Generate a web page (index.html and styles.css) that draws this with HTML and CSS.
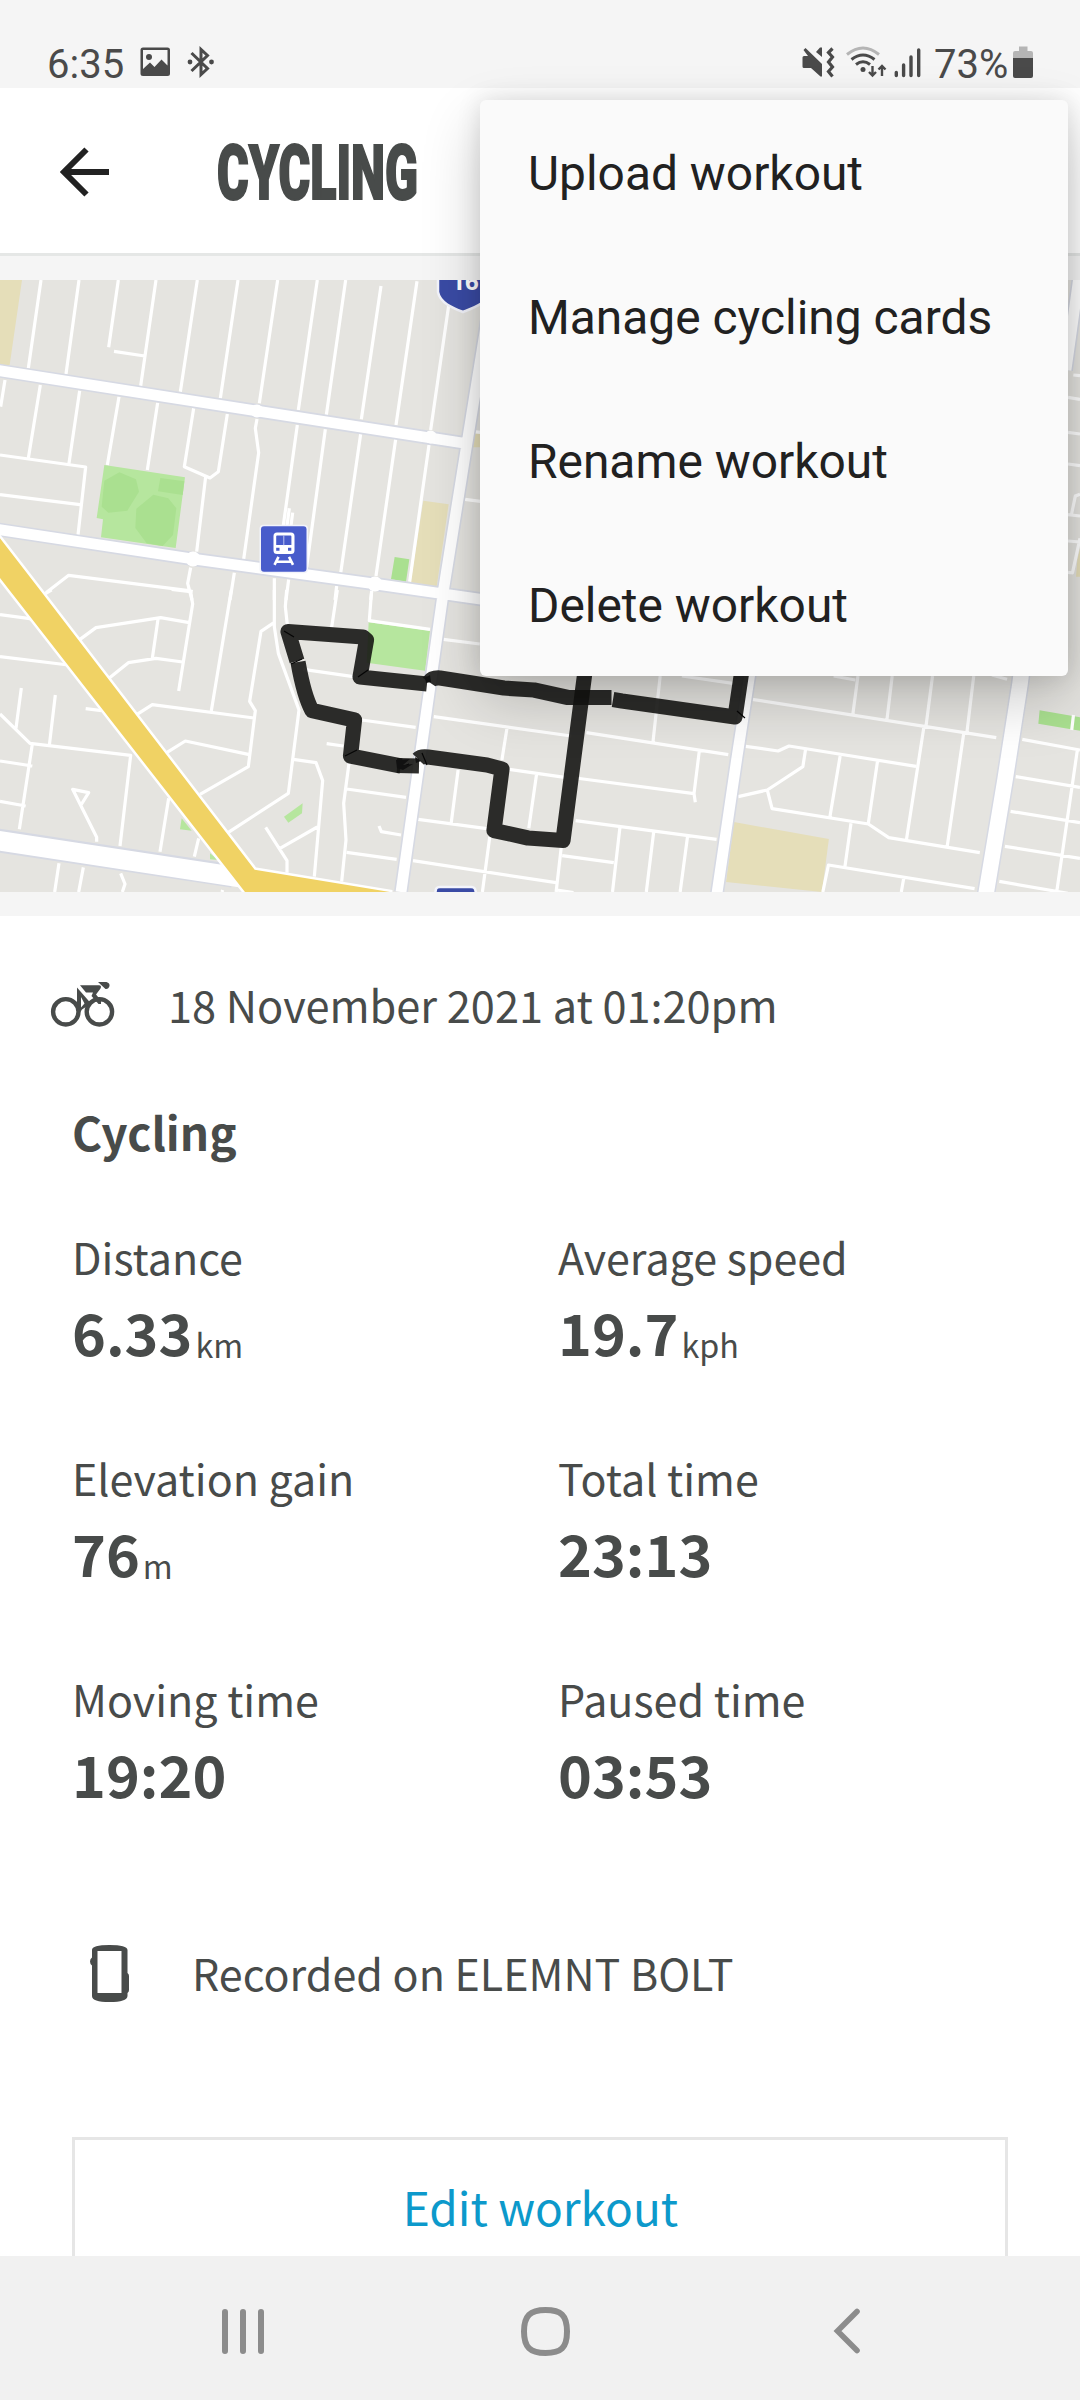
FILE: index.html
```html
<!DOCTYPE html>
<html lang="en">
<head>
<meta charset="utf-8">
<title>Cycling</title>
<link rel="stylesheet" href="styles.css">
</head>
<body>
<div class="screen">
  <header class="status">
    <span class="clock">6:35</span>
    <svg class="status-left" width="80" height="34" viewBox="138 45 80 34">
      <path fill="#4a4a4a" fill-rule="evenodd" d="M143 47.500h24.500q2.500 0 2.500 2.500v23.500q0 2.500-2.500 2.500H143q-2.500 0-2.500-2.500V50q0-2.500 2.500-2.500zM143 50v19l7-6.500 4.500 4.500 7-7.500 6 6V50z"/>
      <circle cx="149" cy="57" r="3" fill="#4a4a4a"/>
      <path fill="none" stroke="#4a4a4a" stroke-width="3" d="M191.500 53l16 15.500-6.500 6V49.500l6.500 6-16 15.500"/>
      <circle cx="190" cy="62" r="2.400" fill="#4a4a4a"/><circle cx="211.500" cy="62" r="2.400" fill="#4a4a4a"/>
    </svg>
    <svg class="status-right" width="122" height="34" viewBox="801 45 122 34">
      <path fill="#4a4a4a" d="M804 56h4l-4.500-6 2-2L822 64v12.500h-1.500L811 68h-7q-1.500 0-1.500-1.500v-9q0-1.500 1.500-1.500zM816 52l4-4.500h2V57z"/>
      <path fill="none" stroke="#4a4a4a" stroke-width="3.200" d="M832.500 48.500l-4 4 4 4.500-4 5 4 5-4 4.500 4 5"/>
      <g fill="none" stroke="#4a4a4a" stroke-width="3">
        <path stroke="#b5b5b5" d="M847 54.500q16-13 32 0"/>
        <path d="M851.500 59.500q11.500-9 23 0M856 64.500q7-5.500 14 0"/>
        <path stroke-width="2.400" d="M872.500 66v9.500M869 72l3.500 3.500L876 72M882 76v-10M878.500 69.500l3.500-3.500 3.500 3.500"/>
      </g>
      <circle cx="863" cy="69.500" r="2.500" fill="#4a4a4a"/>
      <path stroke="#4a4a4a" stroke-width="3.400" stroke-linecap="round" d="M896.300 72.500v3M903.600 65v10.500M911 57v18.500M918.700 50v25.500"/>
    </svg>
    <span class="percent">73%</span>
    <svg class="battery" width="20" height="34" viewBox="0 0 20 34">
      <path fill="#b5b5b5" d="M6 1.500h8.500V6H18q2 0 2 2v6H0V8q0-2 2-2h4z"/>
      <path fill="#4a4a4a" d="M0 13h20v18q0 2-2 2H2q-2 0-2-2z"/>
    </svg>
  </header>

  <div class="appbar">
    <svg class="back" width="50" height="50" viewBox="0 0 50 50"><path fill="none" stroke="#222" stroke-width="6" d="M49 25H5M26.500 2.500L4 25l22.500 22.500"/></svg>
    <svg class="heading" width="204" height="60" viewBox="0 0 204 60"><text x="1" y="57" textLength="201" lengthAdjust="spacingAndGlyphs">CYCLING</text></svg>
  </div>

  <svg class="map" width="1080" height="612" viewBox="0 0 1080 612">
    <!-- land use -->
    <g transform="translate(0 -10) scale(.33333)">
      <path class="sand" d="M0 30H66L29 285H0zM1270 692L1346 703L1310 950L1232 938zM1424 490H1500V532H1418z"/>
      <path class="park" d="M313 585L555 622L527 834L303 802L309 748L290 744z"/>
      <path class="field" d="M358 607L408 628L417 665L382 722L325 728L305 710L313 632zM481 624L553 634L548 675L474 664zM460 674L505 685L529 715L519 795L488 828L440 820L406 774L409 716zM1184 861L1228 868L1218 935L1173 928z"/>
    </g>
    <g transform="translate(0 310) scale(.33333)">
      <path class="park" d="M545 685L575 722L540 718zM630 790L655 810L630 808zM852 680L908 640L906 670L865 698zM1106 97L1290 122L1275 242L1100 218z"/>
    </g>
    <g transform="translate(400 310) scale(.43365 .33333)">
      <path class="sand" d="M770 696L989 747L973 906L752 876z"/>
      <path class="field" d="M1475 361L1570 382V423L1472 401z"/>
    </g>
    <!-- streets -->
    <g class="street" transform="translate(0 -10) scale(.33333)">
      <path d="M123 30L85 295M237 30L198 312M355 30L326 232M342 244L434 258M468 30L422 348M592 30L541 365M714 30L661 385M833 30L778 400M952 30L895 420M1037 30L979 435M1143 48L1084 448M1251 34L1188 465M1347 100L1292 480M15 330L2 410M121 345L85 565M239 362L207 580M357 380L322 585M473 398L442 600M581 415L553 590L630 624L655 605L682 432M617 620L590 845M771 447L766 475L776 548L731 868M892 465L848 780M976 478L920 890M1082 492L1022 910M1187 508L1128 918M1287 525L1229 935M868 715L860 775M878 728L872 775M0 555L257 591L234 795M0 674L240 704M138 968L206 916L566 962L578 965M572 893L563 940L576 990M703 908L690 990M823 925V990M866 928L858 990M1010 948L1005 990M1115 965L1112 990M1395 688L1470 698M1420 485L1470 490"/>
    </g>
    <g class="street" transform="translate(0 310) scale(.33333)">
      <path d="M135 12L155 0M515 -2L572 5L578 42L536 303M240 148L288 113L482 83L568 98M474 88L457 205M328 264L385 218L468 205L548 216M694 0L634 362M410 374L457 344L762 384M823 0V110L835 190L897 360L865 610L684 728M823 97L783 124L749 334L766 362L745 530L600 613M500 488L556 453L745 493M860 0L856 50L862 105M1012 0L995 112M1115 0L1108 92L1290 118M910 238L1060 260M1085 390L1247 412M980 461L1030 468M880 508L948 518L968 572L943 860M1047 520L1031 640L1038 750L1025 875M1040 597L1218 622M1137 708L1144 725L1203 735M1040 787L1190 808M797 712L861 812V848M840 775L952 711M0 74L90 86L110 100M0 200L205 225M64 294L48 415M166 315L148 466M0 372L90 460L392 496L360 768M97 462L58 718M0 513L97 528M0 634L77 648M257 356L305 362M290 755V742L218 598L266 608L243 645M506 625L480 785M596 745L583 800M177 820L164 906M250 832L236 906M362 850L375 882L367 906M668 900L666 906"/>
    </g>
    <g class="street" transform="translate(400 310) scale(.43365 .33333)">
      <path d="M100 148L184 162M78 380L395 438M430 428L757 494M247 412L235 510M252 538L380 562M405 564L678 611L681 637M690 485L678 611M600 258L583 460M650 258L768 280M134 540L118 700M315 552L297 715M42 688L200 716M405 692L730 748M30 812L360 878M207 740L190 906M372 770L360 906M374 797L493 818M507 714L490 906M585 726L568 906M663 740L646 906M362 900L400 908M812 328L1375 443M1000 258L1050 270M1056 258L1044 375M1135 258L1123 388M1228 258L1213 408M1323 258L1307 430M1365 255L1400 268M797 469L872 483L897 468L1190 529M935 480L929 530L847 600L780 620M847 600L858 656L1080 702L1127 743L1337 788M1015 498L991 683M1101 515L1080 700M1208 412L1168 748M1300 430L1262 768M1040 700L1026 830M975 906L988 825L1325 896M1162 862L1156 906M1435 448L1568 480M1420 560L1568 592M1408 664L1568 698M1395 769L1568 805M1382 874L1540 910M1562 480L1515 900M1553 375L1549 420"/>
    </g>
    <g transform="translate(1040 -40) scale(.33333)">
      <path class="sand" d="M108 1010L112 960L120 925V1010z"/>
      <path class="street" d="M100 405L120 407M84 472L120 478M84 577L120 582M84 672L120 677M120 763L106 768L94 825M84 824L120 828M84 903L120 906M120 895L97 1000M84 997L100 999"/>
    </g>
    <!-- arterial roads: casing below, surface above -->
    <g class="casing">
      <path d="M-5 90L257 131L463 163M-5 249L193 279L375 304L500 322M495 -10L468 157L444 307L401 612M752 380L737 477L716 620M1084 -40L1066 90"/>
      <path class="mid" d="M1023 380L1020 404L1005 500L985 620"/>
      <path class="wide" d="M-5 560L233 596"/>
    </g>
    <g class="surface">
      <path d="M-5 90L257 131L463 163M-5 249L193 279L375 304L500 322M495 -10L468 157L444 307L401 612M752 380L737 477L716 620M1084 -40L1066 90"/>
      <path class="mid" d="M1023 380L1020 404L1005 500L985 620"/>
      <path class="wide" d="M-5 560L250 599"/>
    </g>
    <g class="node"><circle cx="257" cy="131" r="6.500"/><circle cx="430.500" cy="157" r="6.500"/><circle cx="193" cy="279" r="7.500"/><circle cx="375" cy="304" r="7.500"/></g>
    <!-- highway -->
    <path class="highway" transform="translate(0 310) scale(.33333)" d="M-100 -285L0 -155L120 0L764 839L1170 906V950H765L735 906L28 0L-100 -164z"/>

    <!-- recorded route -->
    <g class="route">
      <path d="M427 404L360 397L366.500 360L363 357L288 351.500L297 381"/>
      <path d="M298 382Q304 416 312 430.500L354.500 440L350.500 476L401 486"/>
      <path d="M397 485.500L419 486"/>
      <path d="M418 479Q421 476 428 477L487 485L502 489L494 550.500L528 558L563 560.500L586.500 380"/>
      <path d="M429 402Q432 397.500 440 398L504 408L534 410L568 417.500L611.500 417.500"/>
      <path d="M613 419.500L622 421L735 437L743.500 380"/>
    </g>
    <g class="seam"><path d="M284 351l10 6M291 384l11-5M358 397l10-7M345 476l12-6M422 473l5 12M402 487l7-3M737 431l8 7"/></g>
    <path fill="#111" d="M396 480l14-1-7 6 10-1-10 6-6-2zM425 398l5-3 1 7-5 1zM415 477l6 4-5 2z"/>

    <!-- route shields -->
    <path class="shield" d="M438 -20V12C440 23 453 28 463 32C473 28 488 23 490 12V-20z"/>
    <text class="shield-text" x="465" y="10">16</text>
    <path class="shield" d="M434 620L436 609Q437 607 440 607H471Q474 607 475 609L478 620z"/>

    <!-- station marker -->
    <g transform="translate(261 246.300)">
      <rect x="-1.500" y="-1.500" width="48.500" height="48.500" rx="4" fill="#f2f3fa"/>
      <rect width="45.500" height="45.500" rx="3" fill="#485ccb"/>
      <path fill="#fff" fill-rule="evenodd" d="M16 6.200h14q3.500 0 3.500 3.500v14.500q0 3.500-3.500 3.500H16q-3.500 0-3.500-3.500V9.700q0-3.500 3.500-3.500zM16 9.300q-.8 0-.8.800v8.700h15.200v-8.700q0-.8-.8-.8zM15.200 21.500v3h3.300v-3zM27 21.500v3h3.300v-3z"/>
      <path stroke="#bcc4ef" stroke-width="1" d="M22.800 9v10"/>
      <path fill="none" stroke="#fff" stroke-width="2.600" d="M17.500 30.500L13.500 38.500M28 30.500L32 38.500M16 35.500H29.500"/>
    </g>
  </svg>

  <main class="details">
    <div class="when">
      <svg class="bike" width="66" height="48" viewBox="50 980 66 48">
        <g fill="none" stroke="#484b4a" stroke-width="4.400"><circle cx="65.800" cy="1011.800" r="12.700"/><circle cx="99.400" cy="1011.800" r="12.700"/></g>
        <path fill="#484b4a" fill-rule="evenodd" d="M77 987.500L91 1003.500L82 1009.500L80 1012.500L77 1003zM81 997L81 1007.500L84.500 1003.500z"/>
        <path fill="#484b4a" d="M80 985.200H99Q102 985.500 100.500 988.500L96 994.500L101 1000.500V1004H98.500L91.500 996L93 992.500H86zM98 982H106.500Q110 983 109.500 986Q108.500 989.500 105.500 989z"/>
      </svg>
      <span class="date">18 November 2021 at 01:20pm</span>
    </div>
    <h2 class="name">Cycling</h2>
    <dl class="stats">
      <div class="stat"><dt>Distance</dt><dd>6.33<small>km</small></dd></div>
      <div class="stat"><dt>Average speed</dt><dd>19.7<small>kph</small></dd></div>
      <div class="stat"><dt>Elevation gain</dt><dd>76<small>m</small></dd></div>
      <div class="stat"><dt>Total time</dt><dd>23:13</dd></div>
      <div class="stat"><dt>Moving time</dt><dd>19:20</dd></div>
      <div class="stat"><dt>Paused time</dt><dd>03:53</dd></div>
    </dl>
    <div class="device">
      <svg width="40" height="60" viewBox="0 0 40 60">
        <path fill="#484b4a" fill-rule="evenodd" d="M2 8Q2 3 19.500 3T37.500 8V31q1.500 1 1.500 3V48q0 2-1.500 3V54Q37 60 19.500 60T2 54V23.500Q0 22 0 19.500T2 15.500zM7.500 9V51H31.500V9z"/>
      </svg>
      <span>Recorded on ELEMNT BOLT</span>
    </div>
    <button class="edit">Edit workout</button>
  </main>

  <nav class="navbar">
    <svg class="recents" width="44" height="46" viewBox="0 0 44 46"><path stroke="#8c8c8c" stroke-width="6" stroke-linecap="round" d="M4 4v39M22 4v39M40 4v39"/></svg>
    <svg class="home" width="49" height="49" viewBox="0 0 49 49"><path fill="none" stroke="#8c8c8c" stroke-width="6" d="M24.500 3C40 3 46 8 46 24.500S40 46 24.500 46 3 40 3 24.500 9 3 24.500 3z"/></svg>
    <svg width="28" height="46" viewBox="0 0 28 46"><path fill="none" stroke="#8c8c8c" stroke-width="5.600" stroke-linecap="round" d="M24 3.500L4.500 23L24 42.500"/></svg>
  </nav>

  <ul class="menu">
    <li>Upload workout</li>
    <li>Manage cycling cards</li>
    <li>Rename workout</li>
    <li>Delete workout</li>
  </ul>
</div>
</body>
</html>
```
FILE: styles.css
```css
* { box-sizing: border-box; }
body { margin: 0; background: #fff; }
svg { display: block; flex: none; }

.screen {
  position: relative;
  display: flex;
  flex-direction: column;
  width: 1080px;
  height: 2400px;
  overflow: hidden;
  background: #f5f5f5;
  color: #484b4a;
  font-family: "Noto Sans CJK SC", "Noto Sans", sans-serif;
}

.status {
  display: flex;
  flex: none;
  height: 88px;
  padding: 45px 47px 0 47px;
  font: 40px/38px Roboto, sans-serif;
  color: #4a4a4a;
}
.clock { width: 91px; line-height: 39px; }
.status-left { margin-right: auto; }
.percent { width: 90px; padding-left: 11px; line-height: 39px; }

.appbar {
  display: flex;
  flex: none;
  align-items: flex-start;
  height: 168px;
  padding-left: 60px;
  background: #fff;
  border-bottom: 3px solid #e5e7e6;
}
.back { margin-top: 59px; }
.heading { margin: 54px 0 0 106px; overflow: visible; }
.heading text {
  font: 900 76px Roboto, sans-serif;
  fill: #484b4a;
  stroke: #484b4a;
  stroke-width: 2px;
}

.map { margin: 24px 0; background: #e5e4e0; }
.sand { fill: #e5deb9; }
.park { fill: #b6e69e; }
.field { fill: #aae090; }
.street path, path.street {
  fill: none;
  stroke: #fff;
  stroke-width: 3.200px;
  vector-effect: non-scaling-stroke;
}
.street path { stroke-linejoin: round; }
.casing path { fill: none; stroke: #d6d9e3; stroke-width: 14px; }
.surface path { fill: none; stroke: #fff; stroke-width: 10.800px; }
.casing .mid { stroke-width: 18.500px; }
.surface .mid { stroke-width: 15.500px; }
.casing .wide { stroke-width: 23.500px; }
.surface .wide { stroke-width: 19.500px; }
.node { fill: #fff; stroke: none; }
.highway { fill: #f0d264; stroke: #fff; stroke-width: 15px; paint-order: stroke; }
.route path {
  fill: none;
  stroke: #141412;
  stroke-opacity: .89;
  stroke-width: 15.200px;
  stroke-linejoin: round;
}
.seam path { fill: none; stroke: #050505; stroke-width: 1.200px; }
.shield { fill: #3a4ba5; stroke: #f3f4fb; stroke-width: 2.500px; }
.shield-text {
  font: 700 24px "Noto Sans", sans-serif;
  fill: #fff;
  text-anchor: middle;
}

.details {
  display: flex;
  flex: none;
  flex-direction: column;
  height: 1340px;
  padding: 58px 72px 0;
  overflow: hidden;
  background: #fff;
}
.when { display: flex; flex: none; height: 60px; margin-left: -22px; }
.bike { margin-top: 6px; }
.date { margin-left: 52px; font-size: 43.300px; line-height: 60px; white-space: nowrap; }
.name { flex: none; margin: 67px 0 0; font-size: 45.900px; line-height: 60px; font-weight: 700; }
.stats {
  display: grid;
  flex: none;
  grid-template-columns: 486px 1fr;
  grid-auto-rows: 221px;
  margin: 63px 0 0;
}
dt { margin: 0; font-size: 43px; line-height: 64px; }
dd { margin: 3px 0 0; font-size: 57.500px; line-height: 80px; font-weight: 700; }
dd small { margin-left: 3px; font-size: 32.300px; line-height: 1; font-weight: 400; vertical-align: -2px; }
.device {
  display: flex;
  flex: none;
  gap: 62px;
  height: 60px;
  margin-top: 55px;
  padding-left: 18px;
  font-size: 43px;
  line-height: 60px;
}
.edit {
  flex: none;
  height: 160px;
  margin-top: 135px;
  padding: 1px 0 23px 1px;
  border: 3px solid #e6e6e6;
  background: #fff;
  color: #0c99cb;
  font: 46px/130px "Noto Sans CJK SC", sans-serif;
}

.navbar {
  display: flex;
  flex: none;
  align-items: center;
  height: 144px;
  padding: 6px 0 0 221px;
  background: #f1f1f1;
}
.home { margin: 0 263px 0 256px; }

.menu {
  position: absolute;
  top: 100px;
  left: 480px;
  width: 588px;
  height: 576px;
  margin: 0;
  padding: 2px 48px 0;
  list-style: none;
  border-radius: 6px;
  background: #fafafa;
  color: #212121;
  font: 47.900px/144px Roboto, sans-serif;
  box-shadow: 0 24px 60px rgba(0, 0, 0, .2), 0 0 24px rgba(0, 0, 0, .12);
}
.menu li { height: 144px; white-space: nowrap; }
```
